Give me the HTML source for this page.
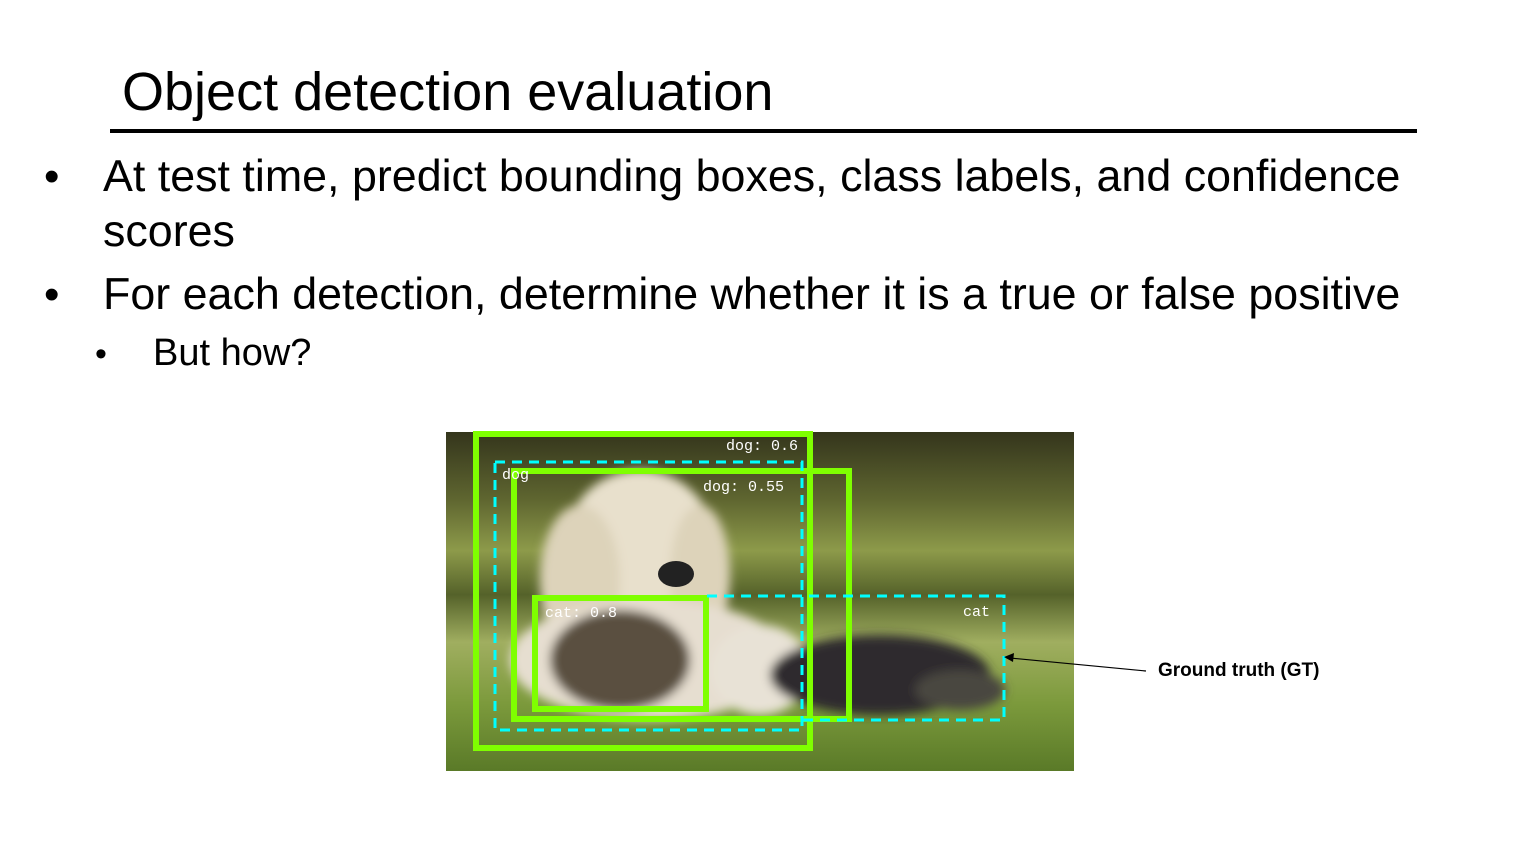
<!DOCTYPE html>
<html><head><meta charset="utf-8"><style>
html,body{margin:0;padding:0;background:#fff;width:1529px;height:852px;overflow:hidden;position:relative;font-family:"Liberation Sans",sans-serif;color:#000}
.t{position:absolute;white-space:nowrap}
</style></head><body>
<div class="t" style="left:122px;top:61px;font-size:54px;">Object detection evaluation</div>
<div style="position:absolute;left:110px;top:129px;width:1307px;height:4px;background:#000"></div>
<div class="t" style="left:44px;top:152px;font-size:44px;">•</div>
<div class="t" style="left:103px;top:151px;font-size:44.8px;">At test time, predict bounding boxes, class labels, and confidence</div>
<div class="t" style="left:103px;top:206px;font-size:44.8px;">scores</div>
<div class="t" style="left:44px;top:270px;font-size:44px;">•</div>
<div class="t" style="left:103px;top:269px;font-size:44.8px;">For each detection, determine whether it is a true or false positive</div>
<div class="t" style="left:95px;top:335px;font-size:34px;">•</div>
<div class="t" style="left:153px;top:332px;font-size:38px;">But how?</div>
<svg style="position:absolute;left:0;top:0" width="1529" height="852">
<defs>
<linearGradient id="bg" x1="0" y1="0" x2="0" y2="1">
<stop offset="0" stop-color="#34351c"/><stop offset="0.2" stop-color="#5f6630"/><stop offset="0.35" stop-color="#8d9a4a"/><stop offset="0.48" stop-color="#55622a"/><stop offset="0.62" stop-color="#a0ae60"/><stop offset="0.8" stop-color="#7c9a3c"/><stop offset="1" stop-color="#5a7a28"/>
</linearGradient>
<filter id="bl"><feGaussianBlur stdDeviation="5"/></filter>
</defs>
<rect x="446" y="432" width="628" height="339" fill="url(#bg)"/>
<g filter="url(#bl)">
<ellipse cx="640" cy="545" rx="75" ry="75" fill="#e8e0cc"/>
<ellipse cx="580" cy="580" rx="40" ry="75" fill="#ddd3ba"/>
<ellipse cx="700" cy="575" rx="30" ry="70" fill="#ddd3ba"/>
<ellipse cx="650" cy="660" rx="140" ry="60" fill="#e6ded0"/>
<ellipse cx="760" cy="670" rx="50" ry="45" fill="#e8e2d6"/>
<ellipse cx="620" cy="660" rx="70" ry="50" fill="#5a5040"/>
<ellipse cx="880" cy="675" rx="110" ry="40" fill="#2e2c2e"/>
<ellipse cx="960" cy="690" rx="45" ry="20" fill="#4a4640"/>
</g>
<ellipse cx="676" cy="574" rx="18" ry="13" fill="#222"/>
<g fill="none" stroke="#7fff00" stroke-width="6">
<rect x="476" y="434" width="334" height="314"/>
<rect x="514" y="471" width="335" height="248"/>
<rect x="535" y="598" width="171" height="111"/>
</g>
<g fill="none" stroke="#00ffff" stroke-width="3" stroke-dasharray="10,7">
<rect x="495" y="462" width="307" height="268"/>
<polyline points="707,596 1004,596 1004,720 800,720"/>
</g>
<g fill="#fff" font-family="Liberation Mono,monospace" font-size="15">
<text x="726" y="450">dog: 0.6</text>
<text x="502" y="479">dog</text>
<text x="703" y="491">dog: 0.55</text>
<text x="545" y="617">cat: 0.8</text>
<text x="963" y="616">cat</text>
</g>
<line x1="1146" y1="671" x2="1010" y2="658" stroke="#000" stroke-width="1.2"/>
<polygon points="1004,657 1014,653 1013,662" fill="#000"/>
</svg>
<div class="t" style="left:1158px;top:660px;font-size:19px;font-weight:bold;">Ground truth (GT)</div>
</body></html>
